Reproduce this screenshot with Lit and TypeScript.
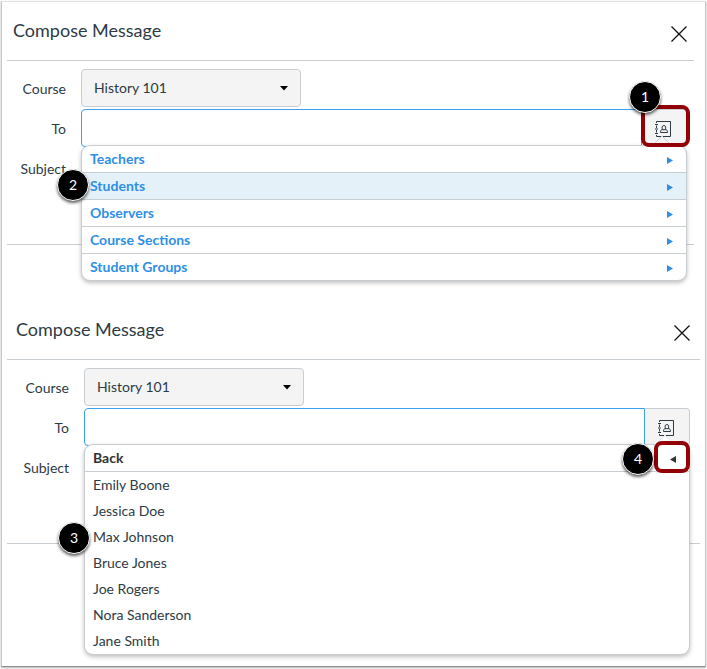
import { LitElement, html, css, svg, nothing } from "lit";
import { customElement, property } from "lit/decorators.js";

const FONT = css`"Lato", "Noto Sans", sans-serif`;

@customElement("step-badge")
class StepBadge extends LitElement {
  static styles = css`
    :host {
      display: block;
    }
    .badge {
      box-sizing: border-box;
      display: grid;
      place-items: center;
      width: 32px;
      height: 32px;
      border: 1px solid #fff;
      border-radius: 50%;
      background: #000;
      color: #fff;
      font: 14px/1 ${FONT};
      box-shadow: 0 2px 3px rgba(0, 0, 0, 0.6);
    }
  `;
  render() {
    return html`<div class="badge"><slot></slot></div>`;
  }
}

const closeIcon = svg`<svg width="16" height="16" viewBox="0 0 16 16" fill="none" stroke="#111" stroke-width="1.3" aria-hidden="true">
  <path d="M0.5 0.5 L15.5 15.5 M15.5 0.5 L0.5 15.5" />
</svg>`;

const bookIcon = svg`<svg width="18" height="18" viewBox="0 0 18 18" fill="none" stroke="#2d3b45" aria-hidden="true">
  <path d="M2.5 3 V1.5 H16.5 V16.5 H2.5 V15 M2.5 5.5 V8 M2.5 10 V12.5" />
  <path d="M1 4.5 H4 M1 9 H4 M1 13.5 H4" />
  <path d="M8.6 9.3 C7.6 8 7.9 5.5 9.9 5.5 C11.9 5.5 12.2 8 11.2 9.3 C12.6 9.6 13.5 10.3 13.5 12.5 H6.5 C6.5 10.3 7.2 9.6 8.6 9.3 Z M8 9.7 H11.8" />
</svg>`;

@customElement("compose-dialog")
class ComposeDialog extends LitElement {
  @property({ type: Array }) groups: string[] = [];
  @property({ type: Array }) people: string[] = [];
  @property() selected = "";

  static styles = css`
    :host {
      display: block;
      font: 14px/20px ${FONT};
      color: #2d3b45;
    }
    .head {
      display: flex;
      align-items: center;
      justify-content: space-between;
      box-sizing: border-box;
      height: 59px;
      padding: 0 calc(7px + var(--inset, 0px)) 2px calc(6px + var(--inset, 0px));
      border-bottom: 1px solid #c7cdd1;
    }
    h2 {
      margin: 0;
      font-size: 18px;
      line-height: 24px;
      font-weight: 400;
    }
    button {
      font: inherit;
      color: inherit;
      padding: 0;
      border: 0;
      background: none;
      cursor: pointer;
    }
    .close {
      display: block;
      height: 16px;
      margin-top: 8px;
    }
    svg {
      display: block;
    }
    .form {
      display: grid;
      grid-template-columns: 59px minmax(0, 1fr);
      grid-auto-rows: 38px;
      column-gap: 15px;
      row-gap: 2px;
      box-sizing: border-box;
      height: 184px;
      padding: 8px calc(7px + var(--inset, 0px)) 0 var(--inset, 0px);
      border-bottom: 1px solid #c7cdd1;
    }
    .label {
      align-self: center;
      justify-self: end;
      padding-top: 2px;
    }
    .course {
      position: relative;
      width: 220px;
    }
    select,
    input {
      box-sizing: border-box;
      width: 100%;
      height: 38px;
      margin: 0;
      border: 1px solid #c7cdd1;
      border-radius: 4px;
      font: inherit;
      color: inherit;
      outline: none;
    }
    select {
      appearance: none;
      padding: 0 12px;
      background: #f4f4f4;
    }
    .caret {
      position: absolute;
      right: 13px;
      top: 17px;
      pointer-events: none;
    }
    .field {
      position: relative;
      display: flex;
    }
    .to {
      flex: 1;
      min-width: 0;
      border-color: #3ba0f0;
      border-radius: 4px 0 0 4px;
    }
    .book {
      display: grid;
      place-items: center;
      box-sizing: border-box;
      width: 45px;
      padding: 2px 2px 0 0;
      border: 1px solid #c7cdd1;
      border-left: 0;
      border-radius: 0 4px 4px 0;
      background: #f4f4f4;
    }
    .menu {
      position: absolute;
      z-index: 1;
      top: 36px;
      left: 0;
      right: 0;
      border: 1px solid #c7cdd1;
      border-radius: 9px;
      background: #fff;
      box-shadow: 0 2px 4px rgba(0, 0, 0, 0.25);
    }
    .tip {
      position: absolute;
      right: 14px;
      top: -11px;
    }
    ul {
      margin: 0;
      padding: 0;
      list-style: none;
    }
    li {
      position: relative;
    }
    .row {
      display: flex;
      align-items: center;
      justify-content: space-between;
      width: 100%;
      height: 26px;
      padding: 0 13px 0 8px;
      text-align: left;
    }
    .group {
      font-weight: 700;
      color: #2f8fe6;
    }
    .group-item + .group-item {
      border-top: 1px solid #c7cdd1;
    }
    .back-item {
      border-bottom: 1px solid #c7cdd1;
    }
    .selected {
      background: #e5f1f8;
    }
    .back {
      font-weight: 700;
      color: #333;
    }
    .mark {
      position: absolute;
      z-index: 2;
      box-sizing: border-box;
      border: 4px solid #930006;
      border-radius: 8px;
      pointer-events: none;
    }
    .mark-book {
      width: 49px;
      height: 42px;
      top: -4px;
      right: -3px;
    }
    .mark-back {
      width: 36px;
      height: 32px;
      top: -4px;
      right: -1px;
    }
    step-badge {
      position: absolute;
      z-index: 3;
    }
    .on-book {
      right: 26px;
      top: -28px;
    }
    .on-back {
      right: 35px;
      top: -2px;
    }
    .on-group {
      left: -25px;
      top: -4px;
    }
    .on-person {
      left: -27px;
      top: -2px;
    }
  `;

  private triangle(left: boolean) {
    return left
      ? html`<svg width="6" height="9" viewBox="0 0 6 9" fill="#333"><path d="M6 2 V9 L0 5.5 Z" /></svg>`
      : html`<svg width="6" height="9" viewBox="0 0 6 9" fill="#2f8fe6"><path d="M0 2 V9 L6 5.5 Z" /></svg>`;
  }

  render() {
    const browsing = this.groups.length > 0;
    return html`
      <div class="head">
        <h2>Compose Message</h2>
        <button class="close" aria-label="Close">${closeIcon}</button>
      </div>
      <div class="form">
        <label class="label" for="course">Course</label>
        <div class="course">
          <select id="course"><option>History 101</option></select>
          <svg class="caret" width="8" height="5" viewBox="0 0 8 5"><path d="M0 0 H8 L4 4.5 Z" /></svg>
        </div>
        <label class="label" for="to">To</label>
        <div class="field">
          <input class="to" id="to" type="text" />
          <button class="book" aria-label="Address book">${bookIcon}</button>
          ${browsing
            ? html`<div class="mark mark-book"></div><step-badge class="on-book">1</step-badge>`
            : nothing}
          <div class="menu">
            <svg class="tip" width="20" height="12" viewBox="0 0 20 12">
              <path d="M0 12 V11 L10 1 L20 11 V12 Z" fill=${browsing ? "#f4f4f4" : "#fff"} />
              <path d="M0 11 L10 1 L20 11" fill="none" stroke=${browsing ? "#c7cdd1" : "#e3e6e8"} />
            </svg>
            ${browsing ? this.renderGroups() : this.renderPeople()}
          </div>
        </div>
        <label class="label" for="subject">Subject</label>
        <input id="subject" type="text" />
      </div>
    `;
  }

  private renderGroups() {
    return html`<ul>
      ${this.groups.map((g) => {
        const on = g === this.selected;
        return html`<li class="group-item ${on ? "selected" : ""}">
          <button class="row group">${g}${this.triangle(false)}</button>
          ${on ? html`<step-badge class="on-group">2</step-badge>` : nothing}
        </li>`;
      })}
    </ul>`;
  }

  private renderPeople() {
    return html`<ul>
      <li class="back-item">
        <button class="row back">Back${this.triangle(true)}</button>
        <div class="mark mark-back"></div>
        <step-badge class="on-back">4</step-badge>
      </li>
      ${this.people.map(
        (p) => html`<li>
          <button class="row">${p}</button>
          ${p === this.selected ? html`<step-badge class="on-person">3</step-badge>` : nothing}
        </li>`
      )}
    </ul>`;
  }
}

@customElement("app-root")
class AppRoot extends LitElement {
  static styles = css`
    :host {
      display: block;
      background: #fff;
      overflow: hidden;
    }
    .frame {
      margin: 1px 1px 2px;
      padding: 0 0 122px 5px;
      border: 1px solid #c4c6c8;
      border-top-color: #e2e2e2;
      border-bottom-color: #8c8c8c;
      box-shadow: 0 1px 2px rgba(0, 0, 0, 0.3);
    }
    .first {
      margin-right: 11px;
    }
    .second {
      margin: 56px 5px 0 0;
      --inset: 3px;
    }
  `;
  render() {
    return html`<main class="frame">
      <compose-dialog
        class="first"
        .groups=${["Teachers", "Students", "Observers", "Course Sections", "Student Groups"]}
        .selected=${"Students"}
      ></compose-dialog>
      <compose-dialog
        class="second"
        .people=${["Emily Boone", "Jessica Doe", "Max Johnson", "Bruce Jones", "Joe Rogers", "Nora Sanderson", "Jane Smith"]}
        .selected=${"Max Johnson"}
      ></compose-dialog>
    </main>`;
  }
}
